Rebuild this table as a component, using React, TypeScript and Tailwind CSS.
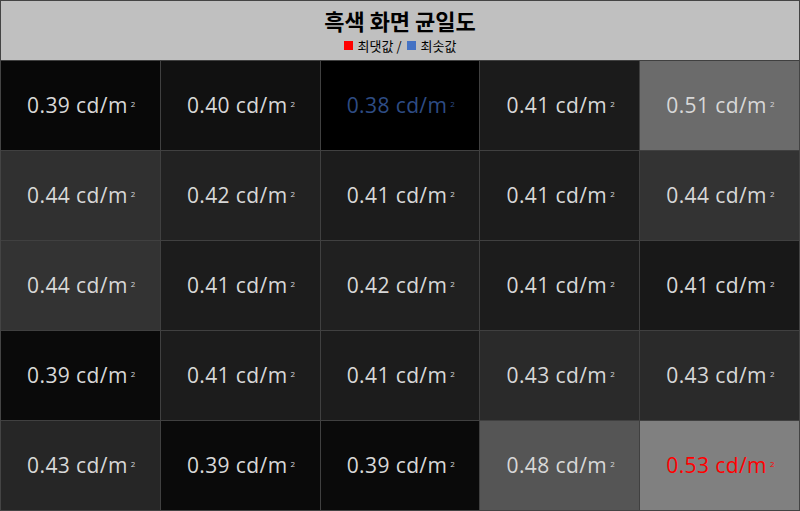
const cells: { v: string; bg: string; kind?: 'min' | 'max' }[] = [
  { v: '0.39', bg: 'bg-[#080808]' },
  { v: '0.40', bg: 'bg-[#111111]' },
  { v: '0.38', bg: 'bg-[#000000]', kind: 'min' },
  { v: '0.41', bg: 'bg-[#1b1b1b]' },
  { v: '0.51', bg: 'bg-[#6b6b6b]' },
  { v: '0.44', bg: 'bg-[#303030]' },
  { v: '0.42', bg: 'bg-[#222222]' },
  { v: '0.41', bg: 'bg-[#1c1c1c]' },
  { v: '0.41', bg: 'bg-[#1c1c1c]' },
  { v: '0.44', bg: 'bg-[#333333]' },
  { v: '0.44', bg: 'bg-[#333333]' },
  { v: '0.41', bg: 'bg-[#1c1c1c]' },
  { v: '0.42', bg: 'bg-[#202020]' },
  { v: '0.41', bg: 'bg-[#1c1c1c]' },
  { v: '0.41', bg: 'bg-[#181818]' },
  { v: '0.39', bg: 'bg-[#0a0a0a]' },
  { v: '0.41', bg: 'bg-[#1c1c1c]' },
  { v: '0.41', bg: 'bg-[#1c1c1c]' },
  { v: '0.43', bg: 'bg-[#2a2a2a]' },
  { v: '0.43', bg: 'bg-[#2a2a2a]' },
  { v: '0.43', bg: 'bg-[#262626]' },
  { v: '0.39', bg: 'bg-[#0a0a0a]' },
  { v: '0.39', bg: 'bg-[#0a0a0a]' },
  { v: '0.48', bg: 'bg-[#555555]' },
  { v: '0.53', bg: 'bg-[#808080]', kind: 'max' },
];

export default function App() {
  return (
    <div className="w-[800px] h-[511px] border border-[#444444] bg-[#404040] flex flex-col font-['Open_Sans','Noto_Sans_CJK_KR',sans-serif]">
      {/* Header */}
      <div className="h-[59px] bg-[#c0c0c0] flex flex-col items-center pt-[3px]">
        <h1 className="text-[22px] leading-[32px] font-bold text-black font-['Noto_Sans_CJK_KR',sans-serif]">
          흑색 화면 균일도
        </h1>
        <div className="flex items-center gap-[5px] text-[13px] leading-[19px] text-black font-['Noto_Sans_CJK_KR',sans-serif]">
          <span className="w-[9px] h-[9px] bg-[#ff0000]" />
          <span>최댓값 /</span>
          <span className="w-[9px] h-[9px] bg-[#4472c4]" />
          <span>최솟값</span>
        </div>
      </div>

      {/* Grid */}
      <div className="flex-1 grid grid-cols-5 grid-rows-5 gap-px mt-px">
        {cells.map((c, i) => (
          <div
            key={i}
            className={`${c.bg} flex items-center justify-center text-[21px] tracking-[0.4px] ${
              c.kind === 'min'
                ? 'text-[#2e4c84]'
                : c.kind === 'max'
                ? 'text-[#ff0000]'
                : 'text-[#d8d8d8]'
            }`}
          >
            <span className="pl-[2px]">
              {c.v} cd/m
              <sup className="text-[8px] relative -top-[6px] ml-[3px]">2</sup>
            </span>
          </div>
        ))}
      </div>
    </div>
  );
}
